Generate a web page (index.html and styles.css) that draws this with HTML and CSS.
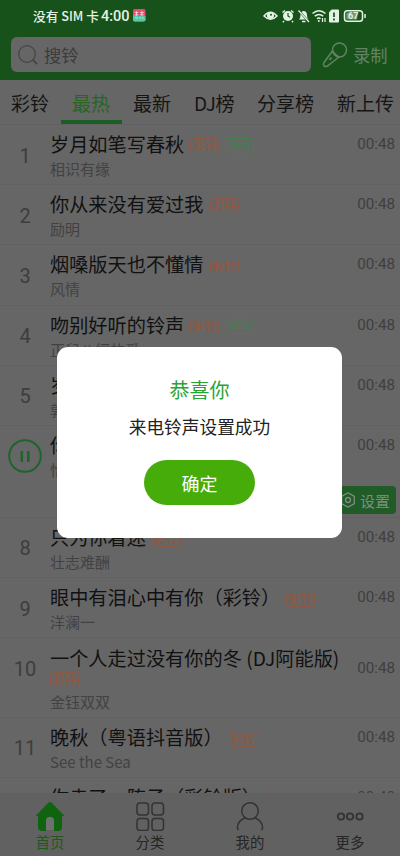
FILE: index.html
```html
<!DOCTYPE html>
<html lang="zh-CN">
<head>
<meta charset="utf-8">
<title>铃声</title>
<link rel="stylesheet" href="styles.css">
</head>
<body>
<div class="phone">
  <header class="top">
    <div class="status">
      <span class="carrier">没有 SIM 卡</span><span class="clock">4:00</span>
      <svg class="app" viewBox="0 0 14 14"><rect width="14" height="14" rx="2" fill="#e84a72"/><path d="M0 7l14 1v4a2 2 0 0 1-2 2H2a2 2 0 0 1-2-2z" fill="#55c8a5"/><path d="M2 4h4M8 4h4M2 6.500h4M8 6.500h4M4 2.500v5M10 2.500v5M2.500 10h3M7 10h2M10 10h2" stroke="#fff" stroke-opacity=".7"/></svg>
      <svg class="tray" viewBox="0 0 104 14" fill="none" stroke="#e4f3e4" stroke-width="1.500">
        <path d="M1 7Q7.500-.5 14 7Q7.500 13.500 1 7z"/><circle cx="7.500" cy="6.500" r="2.800" fill="#e4f3e4"/><circle cx="8" cy="5.800" r="1" fill="#18521b" stroke="none"/>
        <circle cx="25" cy="7" r="5" fill="#e4f3e4" stroke="none"/><path d="M19.500 3.500l2.500-2M30.500 3.500l-2.500-2M21 12l-1 1.200M29 12l1 1.200"/><path d="M25 4v3l2 1.300" stroke="#18521b" stroke-width="1.200"/>
        <path d="M36 10.500q1.500-1.500 1.500-4.500c0-5.500 6.500-5.500 6.500 0q0 3 1.500 4.500z" fill="#e4f3e4" stroke="none"/><path d="M39 12.500h3.500"/><path d="M36.500 2.500l9 10" stroke="#18521b" stroke-width="2"/><path d="M35.500 1.500l10.500 11.500" stroke-width="1.200"/>
        <path d="M49.500 4.500Q56-1 62.500 4.500M51.800 7.200Q56 3.700 60.200 7.200M54 9.700q2-1.500 3.500 0"/><circle cx="55.800" cy="12" r="1" fill="#e4f3e4" stroke="none"/><path d="M59.500 9v4M62 9v4" stroke-width="1.200"/>
        <path d="M68.500 1h7v12h-9V3.500z" fill="#e4f3e4" stroke-width="1"/><path d="M71 3.500v4.500M71 9.500v2" stroke="#18521b" stroke-width="1.700"/>
        <rect x="81.500" y="1.700" width="18" height="10.600" rx="2.800"/><rect x="83.300" y="3.500" width="11" height="7" rx="1" fill="#789b7a" stroke="none"/><path d="M102 5v4"/>
        <text x="85" y="10.300" class="battery">67</text>
      </svg>
    </div>
    <div class="searchbar">
      <div class="field">
        <svg width="20" height="20" viewBox="0 0 20 20" fill="none" stroke="#454545" stroke-width="1.300"><circle cx="9" cy="9" r="8.300"/><path d="M15 15l4 4" stroke-width="1.800"/></svg>
        <span>搜铃</span>
      </div>
      <div class="record">
        <svg width="26" height="26" viewBox="0 0 26 26" fill="none" stroke="#638364" stroke-width="1.500"><circle cx="17.500" cy="8" r="7"/><path d="M10.500 9L2 20.500c-1.500 3 .5 5 3.500 3.500L17 15"/><path d="M10.500 9q3 4.500 6.500 6"/><path d="M9.500 15.500l-2 2.500" stroke-width="2"/></svg>
        <span>录制</span>
      </div>
    </div>
  </header>
  <nav class="tabs"><span>彩铃</span><span class="on">最热</span><span>最新</span><span class="dj">DJ榜</span><span>分享榜</span><span>新上传</span></nav>
  <main class="list">
    <article class="row"><b class="no">1</b><div class="info"><h3>岁月如笔写春秋<i class="tag">彩铃</i><i class="tag new">NEW</i></h3><p>相识有缘</p></div><time>00:48</time></article>
    <article class="row"><b class="no">2</b><div class="info"><h3>你从来没有爱过我<i class="tag">彩铃</i></h3><p>励明</p></div><time>00:48</time></article>
    <article class="row"><b class="no">3</b><div class="info"><h3>烟嗓版天也不懂情<i class="tag">彩铃</i></h3><p>风情</p></div><time>00:48</time></article>
    <article class="row"><b class="no">4</b><div class="info"><h3>吻别好听的铃声<i class="tag">彩铃</i><i class="tag new">NEW</i></h3><p>正兒八經的愛</p></div><time>00:48</time></article>
    <article class="row"><b class="no">5</b><div class="info"><h3>岁月</h3><p>郭</p></div><time>00:48</time></article>
    <article class="row playing">
      <span class="no"><svg width="34" height="34" viewBox="0 0 34 34" fill="none" stroke="#1d6529" stroke-width="2"><circle cx="17" cy="17" r="15.800"/><path d="M13.800 12v11M20.300 12v11" stroke-width="2.500"/></svg></span>
      <div class="info"><h3>你</h3><p>怡</p></div><time>00:48</time>
      <div class="actions"><span class="set"><svg width="16" height="16" viewBox="0 0 16 16" fill="none" stroke="#7c8f7e" stroke-width="1.300"><path d="M8 .8l6.300 3.600v7.200L8 15.200l-6.300-3.600V4.400z" stroke-linejoin="round"/><circle cx="8" cy="8" r="2.500"/></svg>设置</span></div>
    </article>
    <article class="row"><b class="no">8</b><div class="info"><h3>只为你着迷<i class="tag">彩铃</i></h3><p>壮志难酬</p></div><time>00:48</time></article>
    <article class="row"><b class="no">9</b><div class="info"><h3>眼中有泪心中有你（彩铃）<i class="tag">彩铃</i></h3><p>洋澜一</p></div><time>00:48</time></article>
    <article class="row two"><b class="no">10</b><div class="info"><h3>一个人走过没有你的冬 (DJ阿能版)</h3><div class="under"><i class="tag">彩铃</i></div><p>金钰双双</p></div><time>00:48</time></article>
    <article class="row"><b class="no">11</b><div class="info"><h3>晚秋（粤语抖音版）<i class="tag">彩铃</i></h3><p>See the Sea</p></div><time>00:48</time></article>
    <article class="row"><b class="no"></b><div class="info"><h3>你走了一阵子（彩铃版）<i class="tag">彩铃</i></h3></div><time>00:48</time></article>
  </main>
  <footer class="bottom">
    <div class="on"><svg viewBox="0 0 30 30"><path d="M15 1Q16 1 17 2L29.500 15H27v11q0 4-4 4h-4v-10q0-4-4-4t-4 4v10H7q-4 0-4-4V15H.5L13 2q1-1 2-1z" fill="#11640f"/><path d="M11 29V20q0-4 4-4t4 4v9z" fill="#707070"/></svg><span>首页</span></div>
    <div><svg viewBox="0 0 30 30" fill="none" stroke="#333" stroke-width="1.500"><rect x="2" y="2" width="11.500" height="12" rx="3"/><rect x="17" y="2" width="11.500" height="12" rx="3"/><rect x="2" y="17.500" width="11.500" height="12" rx="3"/><rect x="17" y="17.500" width="11.500" height="12" rx="3"/></svg><span>分类</span></div>
    <div><svg viewBox="0 0 30 30" fill="none" stroke="#333" stroke-width="1.500"><circle cx="15" cy="10" r="8.300"/><path d="M10 17Q2 20 2.500 27.500l1 1.500M20 17q8 3 7.500 10.500l-1 1.500"/></svg><span>我的</span></div>
    <div><svg viewBox="0 0 30 30" fill="none" stroke="#333" stroke-width="1.800"><circle cx="6" cy="15.500" r="3.200"/><circle cx="15" cy="15.500" r="3.200"/><circle cx="24.500" cy="15.500" r="3.200"/></svg><span>更多</span></div>
  </footer>
  <section class="dialog"><h2>恭喜你</h2><p>来电铃声设置成功</p><button>确定</button></section>
</div>
</body>
</html>
```
FILE: styles.css
```css
* { box-sizing: border-box; margin: 0; padding: 0; }
body { font-family: "Noto Sans CJK SC", "Noto Sans", sans-serif; background: #666; }
.phone { position: relative; width: 400px; height: 856px; overflow: hidden; display: flex; flex-direction: column; background: #666; }
.top { height: 80px; flex: none; background: #18521b; }
.status { height: 31px; padding: 0 33px; display: flex; align-items: center; color: #e4f3e4; font-size: 12.7px; font-weight: 500; white-space: nowrap; }
.clock { font-family: Roboto, sans-serif; font-size: 14.5px; margin: 1px 0 0 2px; }
.app { width: 12.5px; height: 12.5px; margin-left: 4px; }
.tray { width: 104px; height: 14px; margin-left: auto; }
.battery { font: 700 9px Roboto, sans-serif; fill: #e4f3e4; stroke: none; }
.searchbar { display: flex; align-items: center; padding: 6px 11px 0; }
.field { width: 300px; height: 35px; border-radius: 6px; background: #666; display: flex; align-items: center; gap: 6px; padding-left: 7px; font-size: 17.3px; color: #3c3c3c; }
.record { display: flex; align-items: center; gap: 5px; margin-left: 11px; font-size: 17.3px; color: #638364; white-space: nowrap; }
.tabs { height: 44px; flex: none; display: flex; gap: 23px; padding-left: 11px; font-size: 19px; line-height: 45px; color: #151515; white-space: nowrap; overflow: hidden; }
.tabs span { flex: none; }
.tabs .dj { letter-spacing: -.5px; }
.tabs .on { color: #26681b; border-bottom: 4px solid #1b5e25; padding: 0 11.5px; margin: 0 -11.5px; border-radius: 0 0 1px 1px; }
.list { flex: 1; min-height: 0; overflow: hidden; }
.row { height: 60.2px; border-top: 1px solid #616161; display: grid; grid-template-columns: 50px 1fr auto; align-content: start; padding: 7px 5px 0 0; }
.no { font: 400 20px Roboto, sans-serif; color: #3d3d3d; text-align: center; align-self: center; height: 23px; line-height: 23px; }
h3 { font-size: 19.2px; line-height: 25px; font-weight: 400; color: #111; white-space: nowrap; display: flex; align-items: center; }
.info p { font-size: 15px; line-height: 22px; color: #424242; margin-top: 1px; }
time { font: 15.2px/24px Roboto, sans-serif; color: #3f3f3f; }
.tag { width: 29px; height: 15.5px; border: 1px solid #8c5846; border-radius: 4px; margin-left: 6px; font-size: 11.8px; line-height: 12.5px; font-style: normal; text-align: center; color: #985539; position: relative; top: 1.5px; flex: none; }
.tag.new { border-color: #42804c; color: #42804c; font-family: Roboto, sans-serif; font-size: 10.8px; line-height: 14px; }
.playing { height: 92px; }
.playing .no { height: 34px; margin-top: -2px; }
.actions { grid-column: 1 / -1; display: flex; justify-content: flex-end; margin-top: 5.5px; }
.set { height: 28px; padding: 0 6px; border-radius: 4px; background: #205b28; color: #7c8f7e; font-size: 15px; display: flex; align-items: center; gap: 4px; margin-right: -1px; }
.two { height: 79.5px; padding-top: 7.5px; }
.two .no { align-self: start; margin-top: 12px; }
.two time { margin-top: 10px; }
.under { height: 19px; display: flex; }
.under .tag { margin: 0; }
.bottom { height: 63px; flex: none; background: #616161; display: grid; grid-template-columns: repeat(4, 1fr); }
.bottom div { display: flex; flex-direction: column; align-items: center; padding-top: 8px; font-size: 14.4px; line-height: 22px; color: #252525; }
.bottom svg { width: 30px; height: 30px; }
.bottom .on { color: #1c5a18; }
.dialog { position: absolute; left: 57px; top: 347px; width: 285px; height: 191px; border-radius: 11px; background: #fff; display: flex; flex-direction: column; align-items: center; padding-top: 28px; }
h2 { font-size: 20px; line-height: 30px; font-weight: 400; color: #2ba334; }
.dialog p { font-size: 17.7px; line-height: 26px; color: #222; margin-top: 8px; }
button { width: 111px; height: 45px; border: 0; border-radius: 23px; background: #45ac09; color: #fff; font: 18px "Noto Sans CJK SC", sans-serif; margin-top: 21px; }
```
